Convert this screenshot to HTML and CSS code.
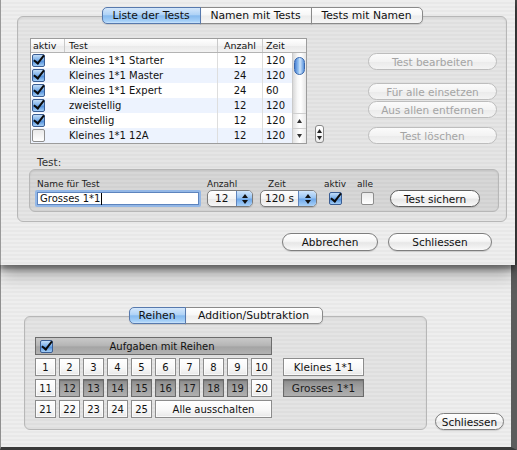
FILE: index.html
```html
<!DOCTYPE html>
<html>
<head>
<meta charset="utf-8">
<link rel="stylesheet" href="styles.css">
</head>
<body>
<div class="screen">
  <div class="sheet stripes">
    <div class="box outer">
      <div class="tabs">
        <div class="tab sel t1">Liste der Tests</div>
        <div class="tab t2">Namen mit Tests</div>
        <div class="tab t3">Tests mit Namen</div>
      </div>
      <div class="main">
        <div class="table">
          <div class="thead">
            <div class="h-aktiv">aktiv</div>
            <div class="h-test">Test</div>
            <div class="h-anz">Anzahl</div>
            <div class="h-zeit">Zeit</div>
          </div>
          <div class="tbody">
            <div class="rows">
              <div class="tr"><div class="c-cb"><span class="cb on"></span></div><div class="c-test">Kleines 1*1 Starter</div><div class="c-anz">12</div><div class="c-zeit">120</div></div>
              <div class="tr alt"><div class="c-cb"><span class="cb on"></span></div><div class="c-test">Kleines 1*1 Master</div><div class="c-anz">24</div><div class="c-zeit">120</div></div>
              <div class="tr"><div class="c-cb"><span class="cb on"></span></div><div class="c-test">Kleines 1*1 Expert</div><div class="c-anz">24</div><div class="c-zeit">60</div></div>
              <div class="tr alt"><div class="c-cb"><span class="cb on"></span></div><div class="c-test">zweistellig</div><div class="c-anz">12</div><div class="c-zeit">120</div></div>
              <div class="tr"><div class="c-cb"><span class="cb on"></span></div><div class="c-test">einstellig</div><div class="c-anz">12</div><div class="c-zeit">120</div></div>
              <div class="tr alt"><div class="c-cb"><span class="cb"></span></div><div class="c-test">Kleines 1*1 12A</div><div class="c-anz">12</div><div class="c-zeit">120</div></div>
            </div>
            <div class="vscroll">
              <div class="track"><div class="thumb"></div></div>
              <div class="sarrow"><svg width="5" height="4" viewBox="0 0 5 4"><path d="M2.5 0L5 4H0Z" fill="#333"/></svg></div>
              <div class="sarrow"><svg width="5" height="4" viewBox="0 0 5 4"><path d="M0 0H5L2.5 4Z" fill="#333"/></svg></div>
            </div>
          </div>
        </div>
        <div class="stepper">
          <svg width="5" height="4" viewBox="0 0 5 4"><path d="M2.5 0L5 4H0Z" fill="#222"/></svg>
          <svg width="5" height="4" viewBox="0 0 5 4"><path d="M0 0H5L2.5 4Z" fill="#222"/></svg>
        </div>
        <div class="sidebtns">
          <div class="btn dis b1">Test bearbeiten</div>
          <div class="btn dis b2">Für alle einsetzen</div>
          <div class="btn dis b3">Aus allen entfernen</div>
          <div class="btn dis b4">Test löschen</div>
        </div>
      </div>
      <div class="testlbl">Test:</div>
      <div class="box inner">
        <div class="fld f-name"><div class="lbl">Name für Test</div><div class="textfield">Grosses 1*1<span class="caret"></span></div></div>
        <div class="fld f-anz"><div class="lbl">Anzahl</div><div class="popup p-anz"><span class="val">12</span><span class="arr"><svg width="6" height="10" viewBox="0 0 6 10"><path d="M3 0L6 4H0Z M0 6H6L3 10Z" fill="#111"/></svg></span></div></div>
        <div class="fld f-zeit"><div class="lbl">Zeit</div><div class="popup p-zeit"><span class="val">120 s</span><span class="arr"><svg width="6" height="10" viewBox="0 0 6 10"><path d="M3 0L6 4H0Z M0 6H6L3 10Z" fill="#111"/></svg></span></div></div>
        <div class="fld f-aktiv"><div class="lbl">aktiv</div><div class="cbwrap"><span class="cb on"></span></div></div>
        <div class="fld f-alle"><div class="lbl">alle</div><div class="cbwrap"><span class="cb"></span></div></div>
        <div class="btn sichern">Test sichern</div>
      </div>
    </div>
    <div class="sheetbtns">
      <div class="btn abbr">Abbrechen</div>
      <div class="btn schl">Schliessen</div>
    </div>
  </div>

  <div class="lower stripes">
    <div class="box lbox">
      <div class="tabs">
        <div class="tab sel r1">Reihen</div>
        <div class="tab r2">Addition/Subtraktion</div>
      </div>
      <div class="reihen">
        <div class="left">
          <div class="bar"><span class="cb on"></span><span class="bartext">Aufgaben mit Reihen</span></div>
          <div class="grid">
            <div class="cell">1</div><div class="cell">2</div><div class="cell">3</div><div class="cell">4</div><div class="cell">5</div>
            <div class="cell">6</div><div class="cell">7</div><div class="cell">8</div><div class="cell">9</div><div class="cell">10</div>
            <div class="cell">11</div><div class="cell on">12</div><div class="cell on">13</div><div class="cell on">14</div><div class="cell on">15</div>
            <div class="cell on">16</div><div class="cell on">17</div><div class="cell on">18</div><div class="cell on">19</div><div class="cell">20</div>
            <div class="cell">21</div><div class="cell">22</div><div class="cell">23</div><div class="cell">24</div><div class="cell">25</div>
            <div class="cell wide">Alle ausschalten</div>
          </div>
        </div>
        <div class="right">
          <div class="cell big">Kleines 1*1</div>
          <div class="cell big on">Grosses 1*1</div>
        </div>
      </div>
    </div>
    <div class="btn lschl">Schliessen</div>
  </div>
</div>
</body>
</html>
```

FILE: styles.css
```css
* { box-sizing: border-box; margin: 0; padding: 0; }
body {
  margin: 0;
  font-family: "DejaVu Sans", "Lucida Grande", sans-serif;
  color: #111;
  background: #3c3c3c;
}
.screen {
  width: 517px;
  height: 450px;
  overflow: hidden;
  background: #4a4a4a;
}
.stripes {
  background: repeating-linear-gradient(to bottom, #eeeeee 0, #eeeeee 2px, #e8e8e8 2px, #e8e8e8 4px);
}

/* ---------- sheet ---------- */
.sheet {
  height: 265px;
  width: 515px;
  border-left: 1px solid #999;
  padding-top: 16px;
  position: relative;
  z-index: 2;
  box-shadow: 0 4px 6px rgba(0, 0, 0, 0.45), 0 8px 18px rgba(0, 0, 0, 0.35);
}
.box {
  border: 1px solid #b7b7b7;
  border-radius: 6px;
  background: rgba(0, 0, 0, 0.035);
  box-shadow: inset 0 1px 2px rgba(0, 0, 0, 0.07);
}
.outer {
  margin-left: 16px;
  width: 490px;
  padding-bottom: 9px;
}

/* tabs */
.tabs {
  display: flex;
  justify-content: center;
  margin-top: -10px;
  height: 17px;
}
.tab {
  height: 17px;
  border: 1px solid #8a8a8a;
  margin-left: -1px;
  background: linear-gradient(#ffffff, #f7f7f7 48%, #ececec 52%, #f6f6f6);
  font-size: 10.8px;
  display: flex;
  align-items: center;
  justify-content: center;
  white-space: nowrap;
  box-shadow: 0 1px 1px rgba(0, 0, 0, 0.12);
}
.tab:first-child { border-radius: 5px 0 0 5px; margin-left: 0; }
.tab:last-child { border-radius: 0 5px 5px 0; }
.tab.sel {
  background: linear-gradient(#d4e7fb, #aed2f6 46%, #86baee 52%, #a6d0f8 88%, #cce5fc);
  border-color: #5779ad;
  position: relative;
  z-index: 1;
}
.t1 { width: 99px; }
.t2 { width: 112px; }
.t3 { width: 112px; }
.r1 { width: 57px; }
.r2 { width: 138px; }

/* main row */
.main {
  display: flex;
  margin-top: 14px;
  padding-left: 12px;
}
.table {
  width: 277px;
  height: 106px;
  border: 1px solid #9c9c9c;
  background: #fff;
  display: flex;
  flex-direction: column;
}
.thead {
  height: 14px;
  display: grid;
  grid-template-columns: 34px 153px 45px 1fr;
  background: linear-gradient(#ffffff, #f4f4f4 50%, #e9e9e9 52%, #f3f3f3);
  border-bottom: 1px solid #b3b3b3;
  font-size: 9.5px;
  line-height: 13px;
  color: #111;
}
.thead > div { border-right: 1px solid #c9c9c9; }
.thead > div:last-child { border-right: 0; }
.h-aktiv { padding-left: 2px; }
.h-test { padding-left: 4px; }
.h-anz { text-align: center; }
.h-zeit { padding-left: 3px; }

.tbody { flex: 1; display: flex; }
.rows { width: 262px; }
.tr {
  height: 15px;
  display: grid;
  grid-template-columns: 34px 153px 45px 1fr;
  font-size: 10px;
  line-height: 15px;
  background: #fff;
}
.tr.alt { background: #edf3fe; }
.tr > div { border-right: 1px solid #dedede; }
.tr > div:first-child, .tr > div:last-child { border-right: 0; }
.c-cb { padding-left: 1px; display: flex; align-items: center; }
.c-test { padding-left: 4px; }
.c-anz { text-align: center; }
.c-zeit { padding-left: 3px; }

/* checkbox */
.cb {
  display: inline-block;
  width: 13px;
  height: 13px;
  border: 1px solid #8d8d8d;
  border-radius: 2px;
  background: linear-gradient(#e9e9e9, #ffffff);
  position: relative;
  flex: none;
}
.cb.on {
  background: linear-gradient(#c2ddf8, #78ade8 48%, #4f8edb 55%, #a4cef6);
  border-color: #3a5d93;
}
.cb.on::after {
  content: "";
  position: absolute;
  left: 3px;
  top: -2px;
  width: 4px;
  height: 9px;
  border: solid #0b0b0b;
  border-width: 0 2.5px 2.5px 0;
  transform: rotate(38deg);
}

/* scrollbar */
.vscroll {
  width: 14px;
  border-left: 1px solid #cacaca;
  display: flex;
  flex-direction: column;
}
.track {
  flex: 1;
  padding: 4px 0 0 1px;
  background: linear-gradient(to right, #d9d9d9, #f7f7f7 35%, #ffffff 60%, #e6e6e6);
}
.thumb {
  width: 11px;
  height: 18px;
  border-radius: 6px;
  border: 1px solid #3a68ad;
  background: linear-gradient(to right, #4a82d4, #9ac6f3 40%, #cfe5fb 55%, #5a93dc);
}
.sarrow {
  height: 15px;
  border-top: 1px solid #cfcfcf;
  display: flex;
  align-items: center;
  justify-content: center;
  background: linear-gradient(to right, #e2e2e2, #ffffff 50%, #ebebeb);
}

.stepper {
  width: 9px;
  height: 18px;
  margin-left: 8px;
  margin-bottom: 1px;
  align-self: flex-end;
  border: 1px solid #8a8a8a;
  border-radius: 3px;
  background: linear-gradient(#ffffff, #ececec);
  display: flex;
  flex-direction: column;
  align-items: center;
  justify-content: space-around;
  padding: 1px 0;
}

.sidebtns {
  margin-left: 44px;
  width: 129px;
  display: flex;
  flex-direction: column;
}
.b1 { margin-top: 15px; }
.b2 { margin-top: 13px; }
.b3 { margin-top: 1px; }
.b4 { margin-top: 9px; }

/* buttons */
.btn {
  height: 17px;
  border: 1px solid #7e7e7e;
  border-radius: 9px;
  background: linear-gradient(#ffffff, #f6f6f6 45%, #e7e7e7 55%, #f2f2f2 85%, #fbfbfb);
  font-size: 10.5px;
  display: flex;
  align-items: center;
  justify-content: center;
  white-space: nowrap;
  color: #111;
  box-shadow: 0 1px 1px rgba(0, 0, 0, 0.13);
}
.btn.dis {
  color: #a4a4a4;
  border-color: #bdbdbd;
  background: linear-gradient(#fbfbfb, #f3f3f3 50%, #ebebeb 55%, #f4f4f4);
  box-shadow: none;
}

/* Test: group */
.testlbl {
  margin-top: 11px;
  height: 14px;
  padding-left: 19px;
  font-size: 10.5px;
  line-height: 14px;
  color: #333;
}
.inner {
  margin-left: 11px;
  width: 470px;
  height: 43px;
  padding: 8px 0 4px 5px;
  display: flex;
  align-items: flex-end;
  background: rgba(0, 0, 0, 0.06);
}
.fld { display: flex; flex-direction: column; }
.lbl {
  height: 12px;
  font-size: 9px;
  line-height: 12px;
  color: #222;
  white-space: nowrap;
}
.f-name .lbl { padding-left: 2px; }
.textfield {
  width: 166px;
  height: 17px;
  border: 2px solid #93b7e6;
  border-radius: 2px;
  box-shadow: inset 0 0 0 1px #5d84be;
  background: #fff;
  font-size: 10px;
  padding-left: 3px;
  display: flex;
  align-items: center;
  white-space: nowrap;
}
.caret {
  display: inline-block;
  width: 1px;
  height: 12px;
  background: #000;
  margin-left: 1px;
}
.f-anz { margin-left: 6px; }
.f-zeit { margin-left: 7px; }
.f-zeit .lbl { padding-left: 8px; }
.popup {
  height: 17px;
  border: 1px solid #7b7b7b;
  border-radius: 5px;
  display: flex;
  overflow: hidden;
  background: linear-gradient(#ffffff, #f4f4f4 50%, #e8e8e8 52%, #f6f6f6);
  box-shadow: 0 1px 1px rgba(0, 0, 0, 0.15);
}
.p-anz { width: 46px; }
.p-zeit { width: 57px; }
.popup .val {
  flex: 1;
  font-size: 10.5px;
  line-height: 15px;
  padding-left: 7px;
  white-space: nowrap;
}
.p-zeit .val { padding-left: 4px; }
.popup .arr {
  width: 16px;
  border-left: 1px solid #5f84bd;
  background: linear-gradient(#d0e5fb, #99c4f2 46%, #6ea8ea 54%, #a9d1f8);
  display: flex;
  align-items: center;
  justify-content: center;
}
.p-zeit .arr { width: 18px; }
.f-aktiv { margin-left: 7px; width: 22px; align-items: center; }
.f-alle { margin-left: 11px; width: 17px; }
.f-alle .cbwrap { padding-left: 4px; }
.cbwrap {
  height: 17px;
  display: flex;
  align-items: center;
}
.sichern {
  margin-left: 16px;
  width: 90px;
  border-color: #5e5e5e;
}

.sheetbtns {
  display: flex;
  justify-content: flex-end;
  margin-top: 11px;
  padding-right: 23px;
}
.abbr { width: 96px; height: 18px; }
.schl { width: 104px; height: 18px; margin-left: 10px; }

/* ---------- lower window ---------- */
.lower {
  height: 185px;
  width: 517px;
  border-left: 1px solid #8f8f8f;
  border-right: 6px solid #5c5c5c;
  border-bottom: 3px solid #3a3a3a;
  padding: 0 0 17px 23px;
  display: flex;
  align-items: flex-end;
}
.lbox {
  width: 403px;
  height: 114px;
  background: rgba(0, 0, 0, 0.04);
}
.reihen {
  display: flex;
  margin-top: 13px;
  padding-left: 10px;
}
.left { width: 237px; }
.bar {
  height: 18px;
  margin-bottom: 3px;
  border: 1px solid #6c6c6c;
  background: linear-gradient(#c9c9c9, #b4b4b4 50%, #a4a4a4 55%, #b2b2b2);
  display: flex;
  align-items: center;
  padding-left: 4px;
}
.bartext {
  flex: 1;
  text-align: center;
  font-size: 10px;
  color: #111;
}
.grid {
  display: grid;
  grid-template-columns: repeat(10, 21px);
  grid-auto-rows: 18px;
  gap: 3px;
}
.cell {
  border: 1px solid #8c8c8c;
  background: linear-gradient(#ffffff, #f8f8f8 55%, #e8e8e8);
  box-shadow: inset 0 0 0 1px rgba(255, 255, 255, 0.7);
  font-size: 10px;
  display: flex;
  align-items: center;
  justify-content: center;
  white-space: nowrap;
}
.cell.on {
  border-color: #6a6a6a;
  background: linear-gradient(#8c8c8c, #9f9f9f 45%, #afafaf);
  box-shadow: inset 0 1px 1px rgba(0, 0, 0, 0.2);
  color: #1a1a1a;
}
.cell.wide { grid-column: span 5; }
.right {
  margin-left: 11px;
  margin-top: 21px;
  width: 81px;
  display: flex;
  flex-direction: column;
  gap: 3px;
}
.cell.big { height: 18px; font-size: 10.5px; }
.lschl {
  width: 69px;
  margin-left: 8px;
}
```
